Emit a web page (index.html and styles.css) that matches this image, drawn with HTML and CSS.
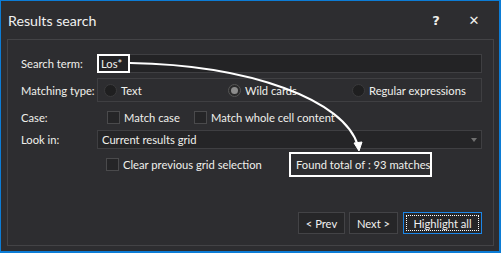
FILE: index.html
```html
<!DOCTYPE html>
<html>
<head>
<meta charset="utf-8">
<link rel="stylesheet" href="styles.css">
</head>
<body>
<div class="dialog">
  <div class="titlebar">
    <div class="title">Results search</div>
    <div class="tb-buttons">
      <span class="tb-help">?</span>
      <span class="tb-close">✕</span>
    </div>
  </div>
  <div class="panel">
    <div class="row r1">
      <div class="label">Search term:</div>
      <div class="textbox"><span class="hl-term">Los*</span></div>
    </div>
    <div class="row r2">
      <div class="label">Matching type:</div>
      <div class="group">
        <label class="radio r-text"><span class="circle"></span>Text</label>
        <label class="radio r-wild"><span class="circle on"></span>Wild cards</label>
        <label class="radio r-regex"><span class="circle"></span>Regular expressions</label>
      </div>
    </div>
    <div class="row r3">
      <div class="label">Case:</div>
      <div class="checks">
        <label class="check c-case"><span class="box"></span>Match case</label>
        <label class="check c-whole"><span class="box"></span>Match whole cell content</label>
      </div>
    </div>
    <div class="row r4">
      <div class="label">Look in:</div>
      <div class="combo"><span>Current results grid</span><span class="caret"></span></div>
    </div>
    <div class="row r5">
      <div class="label"></div>
      <div class="r5-body">
        <label class="check c-clear"><span class="box"></span>Clear previous grid selection</label>
        <div class="found">Found total of : 93 matches</div>
      </div>
    </div>
    <div class="buttons">
      <button class="btn b-prev">&lt; Prev</button>
      <button class="btn b-next">Next &gt;</button>
      <button class="btn b-all"><span class="focus">Highlight all</span></button>
    </div>
  </div>
  <svg class="arrow" width="501" height="253" viewBox="0 0 501 253">
    <path d="M130 63 C 250 65 345 100 358 146" fill="none" stroke="#ffffff" stroke-width="2"/>
    <path d="M354 143 L359 151 L362 142 Z" fill="#ffffff" stroke="#ffffff" stroke-width="1"/>
  </svg>
</div>
</body>
</html>
```
FILE: styles.css
```css
* { box-sizing: border-box; }
html, body { margin: 0; padding: 0; background: #2d2d30; }
body { font-family: "Lato", "Liberation Sans", sans-serif; font-size: 11.2px; color: #f0f0ec; white-space: nowrap; }

.dialog {
  position: relative;
  width: 501px;
  height: 253px;
  background: #2d2d30;
  border-top: 1px solid #0c7cd5;
  border-left: 1px solid #0c7cd5;
  border-right: 2px solid #0c7cd5;
  border-bottom: 2px solid #0c7cd5;
  display: flex;
  flex-direction: column;
}

.titlebar {
  height: 38px;
  display: flex;
  align-items: center;
  justify-content: space-between;
  padding-left: 7px;
}
.title { font-size: 14.2px; color: #f1f1f1; padding-top: 1px; }
.tb-buttons { display: flex; align-items: center; height: 100%; }
.tb-help { width: 38px; text-align: center; font-weight: bold; font-size: 13px; font-family: "DejaVu Sans", sans-serif; }
.tb-close { width: 38px; text-align: center; font-size: 13px; font-weight: bold; font-family: "DejaVu Sans", sans-serif; margin-right: 6px; }

.panel {
  margin: 0 5px 5px 6px;
  flex: 1;
  border: 1px solid #434346;
  padding: 14px 11px 11px 13px;
  display: flex;
  flex-direction: column;
}

.row { display: flex; align-items: center; }
.label { width: 76px; flex: none; }
.row > :last-child { flex: 1; }

.r1 { height: 19px; }
.textbox {
  height: 19px;
  background: #232325;
  border: 1px solid #3f3f42;
  display: flex;
}
.hl-term {
  width: 33px;
  height: 19px;
  margin: -1px 0 0 -1px;
  border: 2px solid #ffffff;
  padding-left: 2px;
  line-height: 15px;
}

.r2 { height: 24px; margin-top: 5px; }
.group {
  height: 24px;
  border: 1px solid #3f3f42;
  display: flex;
  align-items: center;
}
.radio { display: flex; align-items: center; }
.circle {
  width: 13px; height: 13px;
  border-radius: 50%;
  border: 1px solid #3a3a3c;
  background: #1f1f20;
  margin-right: 4px;
  position: relative;
}
.circle.on { border-color: #555; background: #2a2a2b; }
.circle.on::after {
  content: ""; position: absolute; left: 2px; top: 2px;
  width: 7px; height: 7px; border-radius: 50%; background: #8d8d8d;
}
.r-text { margin-left: 6px; width: 124px; }
.r-wild { width: 124px; }

.r3 { height: 20px; margin-top: 5px; }
.checks { display: flex; align-items: center; }
.check { display: flex; align-items: center; }
.box {
  width: 13px; height: 13px;
  border: 1px solid #4a4a4c;
  background: #252527;
  margin-right: 4px;
}
.c-case { margin-left: 10px; width: 87px; }

.r4 { height: 19px; margin-top: 3px; }
.combo {
  height: 19px;
  background: #252527;
  border: 1px solid #3f3f42;
  display: flex;
  align-items: center;
  justify-content: space-between;
  padding: 0 4px 0 4px;
}
.caret {
  width: 0; height: 0;
  border-left: 3.5px solid transparent;
  border-right: 3.5px solid transparent;
  border-top: 4px solid #707070;
}

.r5 { height: 25px; margin-top: 3px; }
.r5-body { display: flex; align-items: center; height: 25px; }
.c-clear { margin-left: 9px; width: 183px; }
.found {
  height: 25px;
  width: 143px;
  border: 2px solid #ffffff;
  display: flex;
  align-items: center;
  padding-left: 5px;
}

.buttons {
  margin-top: auto;
  display: flex;
  justify-content: flex-end;
  align-items: center;
}
.btn {
  height: 22px;
  background: #262628;
  border: 1px solid #434346;
  color: #f1f1f1;
  font-family: inherit;
  font-size: 11.2px;
  padding: 0;
  margin: 0;
}
.b-prev { width: 47px; }
.b-next { width: 49px; margin-left: 4px; }
.b-all { width: 79px; margin-left: 5px; border-color: #1c86e8; padding: 2px; }
.focus {
  display: flex; align-items: center; justify-content: center;
  height: 100%;
  border: 1px dotted #ffffff;
}

.arrow { position: absolute; left: -1px; top: -1px; pointer-events: none; }
```
